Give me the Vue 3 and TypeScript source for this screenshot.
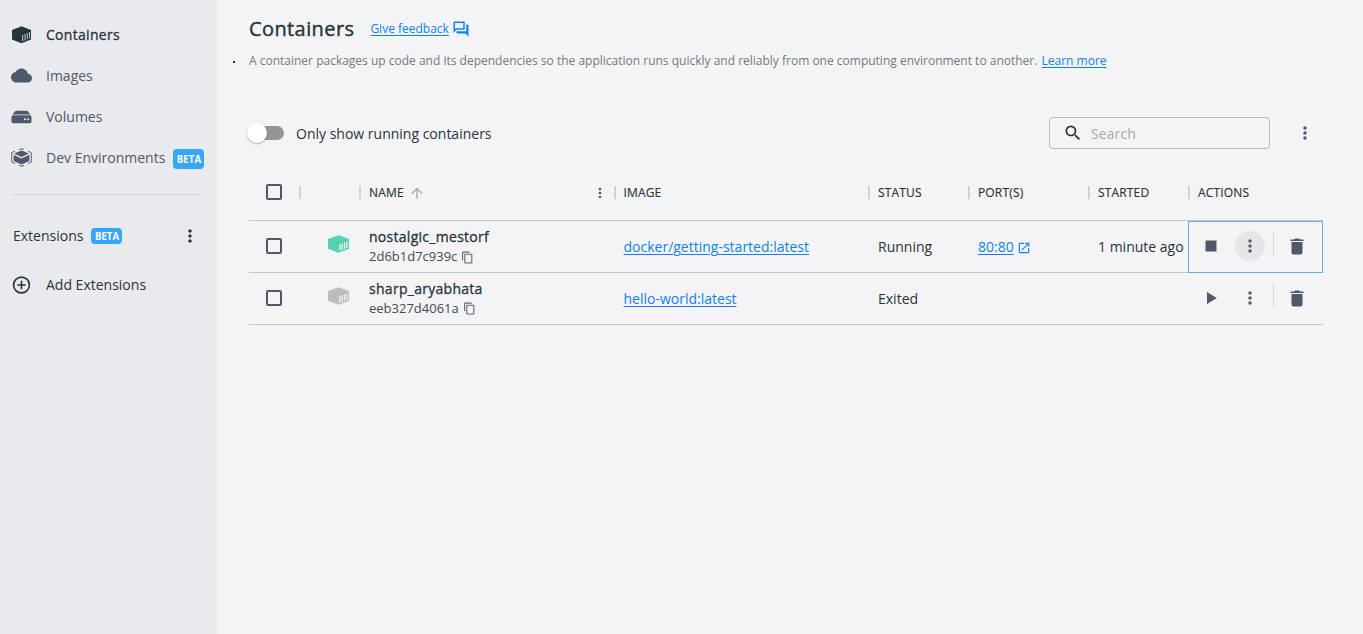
<script setup lang="ts">
import { ref } from 'vue'

interface NavItem {
  label: string
  icon: 'container' | 'cloud' | 'volume' | 'dev'
  beta?: boolean
}
interface ContainerRow {
  name: string
  id: string
  image: string
  status: string
  port?: string
  started: string
  running: boolean
}

const nav: NavItem[] = [
  { label: 'Containers', icon: 'container' },
  { label: 'Images', icon: 'cloud' },
  { label: 'Volumes', icon: 'volume' },
  { label: 'Dev Environments', icon: 'dev', beta: true },
]
const active = ref('Containers')
const columns = ['', '', 'NAME', 'IMAGE', 'STATUS', 'PORT(S)', 'STARTED', 'ACTIONS']
const rows: ContainerRow[] = [
  { name: 'nostalgic_mestorf', id: '2d6b1d7c939c', image: 'docker/getting-started:latest', status: 'Running', port: '80:80', started: '1 minute ago', running: true },
  { name: 'sharp_aryabhata', id: 'eeb327d4061a', image: 'hello-world:latest', status: 'Exited', started: '', running: false },
]
</script>

<template>
  <div class="app">
    <aside class="sidebar">
      <nav>
        <div v-for="item in nav" :key="item.label" class="nav-item" :class="{ active: item.label === active }" @click="active = item.label">
          <span class="nav-icon">
            <svg v-if="item.icon === 'container'" width="21" height="18" viewBox="0 0 21 18">
              <path fill="currentColor" d="M10.500.3 20 4v9.500L10.500 17.300 1 13.500V4z" />
              <path class="bars-dark" d="M11.700 9v6.300M14 8v6.300M16.300 7v6.300M18.500 6v6.300" />
            </svg>
            <svg v-else-if="item.icon === 'cloud'" width="21" height="21" viewBox="0 0 24 24">
              <path fill="currentColor" d="M19.350 10.040C18.670 6.590 15.640 4 12 4 9.110 4 6.600 5.640 5.350 8.040 2.340 8.360 0 10.910 0 14c0 3.310 2.690 6 6 6h13c2.760 0 5-2.240 5-5 0-2.640-2.050-4.780-4.650-4.960z" />
            </svg>
            <svg v-else-if="item.icon === 'volume'" width="21" height="14" viewBox="0 0 22 14">
              <path fill="currentColor" d="M4.800.8Q5.200.4 6 .4h10q.8 0 1.200.4L20.600 4.400H1.400z" />
              <path fill="currentColor" fill-rule="evenodd" d="M2.500 5.200h17q2 0 2 2v4.300q0 2-2 2h-17q-2 0-2-2V7.200q0-2 2-2zM14.600 8.200a1.100 1.100 0 1 0 .01 2.200 1.100 1.100 0 0 0 0-2.200zm3.400 0a1.100 1.100 0 1 0 .01 2.200 1.100 1.100 0 0 0 0-2.200z" />
            </svg>
            <svg v-else width="21" height="19" viewBox="0 0 22 20">
              <path fill="currentColor" d="M11 2.600 18.800 5.800 11 9.400 3.200 5.800zM2.700 7.200l8.300 3.800 8.300-3.800v6.500L11 17.300l-8.300-3.600z" />
              <path fill="none" stroke="currentColor" stroke-width="1" d="M8.300 1.700 11 .7l2.700 1M4 3.400.7 4.900v9.900l3.500 1.600M18 3.400l3.300 1.500v9.900l-3.500 1.600M8.300 18.200l2.700 1.100 2.700-1.100" />
            </svg>
          </span>
          <span>{{ item.label }}</span>
          <span v-if="item.beta" class="beta tall">BETA</span>
        </div>
      </nav>
      <div class="divider"></div>
      <div class="ext-head">
        <span>Extensions</span><span class="beta">BETA</span>
        <svg class="push" width="20" height="20" viewBox="0 0 24 24"><path fill="currentColor" d="M12 8c1.100 0 2-.9 2-2s-.9-2-2-2-2 .9-2 2 .9 2 2 2zm0 2c-1.100 0-2 .9-2 2s.9 2 2 2 2-.9 2-2-.9-2-2-2zm0 6c-1.100 0-2 .9-2 2s.9 2 2 2 2-.9 2-2-.9-2-2-2z" /></svg>
      </div>
      <div class="add-ext">
        <span class="nav-icon"><svg width="19" height="18" viewBox="0 0 18 18" fill="none" stroke="currentColor" stroke-width="1.600"><circle cx="9" cy="9" r="7.900" /><path d="M9 4.800v8.400M4.800 9h8.400" /></svg></span>
        <span>Add Extensions</span>
      </div>
    </aside>

    <main class="main">
      <header class="title-row">
        <h1>Containers</h1>
        <a class="link feedback">Give feedback</a>
        <svg class="chat" width="18" height="18" viewBox="0 0 24 24"><path fill="currentColor" d="M15 4v7H5.170L4 12.170V4h11m1-2H3c-.55 0-1 .45-1 1v14l4-4h10c.55 0 1-.45 1-1V3c0-.55-.45-1-1-1zm5 4h-2v9H6v2c0 .55.45 1 1 1h11l4 4V7c0-.55-.45-1-1-1z" /></svg>
      </header>
      <p class="desc"><i class="bullet"></i>A container packages up code and its dependencies so the application runs quickly and reliably from one computing environment to another. <a class="link learn">Learn more</a></p>

      <div class="toolbar">
        <span class="switch"><i class="knob"></i></span>
        <span class="switch-label">Only show running containers</span>
        <div class="search">
          <svg width="20" height="20" viewBox="0 0 24 24"><path fill="currentColor" d="M15.500 14h-.79l-.28-.27A6.471 6.471 0 0 0 16 9.500 6.500 6.500 0 1 0 9.500 16c1.610 0 3.090-.59 4.230-1.570l.27.28v.79l5 4.990L20.490 19l-4.990-5zm-6 0C7.010 14 5 11.990 5 9.500S7.010 5 9.500 5 14 7.010 14 9.500 11.990 14 9.500 14z" /></svg>
          <span class="placeholder">Search</span>
        </div>
        <svg class="more" width="20" height="20" viewBox="0 0 24 24"><path fill="currentColor" d="M12 8c1.100 0 2-.9 2-2s-.9-2-2-2-2 .9-2 2 .9 2 2 2zm0 2c-1.100 0-2 .9-2 2s.9 2 2 2 2-.9 2-2-.9-2-2-2zm0 6c-1.100 0-2 .9-2 2s.9 2 2 2 2-.9 2-2-.9-2-2-2z" /></svg>
      </div>

      <section class="table">
        <div class="grid head">
          <div v-for="(col, i) in columns" :key="i" class="th" :class="{ first: i === 0 }">
            <i v-if="i === 0" class="checkbox"></i>
            <template v-else><i class="sep"></i><span>{{ col }}</span></template>
            <template v-if="col === 'NAME'">
              <svg class="sort" width="14" height="14" viewBox="0 0 24 24"><path fill="currentColor" d="m4 12 1.410 1.410L11 7.830V20h2V7.830l5.580 5.590L20 12l-8-8-8 8z" transform="translate(-2.400 -2.400) scale(1.200)" /></svg>
              <svg class="push col-more" width="16" height="16" viewBox="0 0 24 24"><path fill="currentColor" d="M12 8c1.100 0 2-.9 2-2s-.9-2-2-2-2 .9-2 2 .9 2 2 2zm0 2c-1.100 0-2 .9-2 2s.9 2 2 2 2-.9 2-2-.9-2-2-2zm0 6c-1.100 0-2 .9-2 2s.9 2 2 2 2-.9 2-2-.9-2-2-2z" /></svg>
            </template>
          </div>
        </div>
        <div v-for="row in rows" :key="row.id" class="grid row">
          <div class="cell center"><i class="checkbox"></i></div>
          <div class="cell state" :class="{ running: row.running }">
            <svg width="22" height="18" viewBox="0 0 22 18">
              <path fill="currentColor" d="M10.500.2 21 4v9.800L10.500 17.800 0 13.800V4z" />
              <path class="bars" d="M11.900 9v6.500M14.200 8.200v6.500M16.600 7.300v6.500M19 6.500V13" />
            </svg>
          </div>
          <div class="cell name">
            <strong>{{ row.name }}</strong>
            <span class="id">{{ row.id }}<svg width="13" height="13" viewBox="0 0 24 24"><path fill="currentColor" d="M16 1H4c-1.100 0-2 .9-2 2v14h2V3h12V1zm3 4H8c-1.100 0-2 .9-2 2v14c0 1.100.9 2 2 2h11c1.100 0 2-.9 2-2V7c0-1.100-.9-2-2-2zm0 16H8V7h11v14z" /></svg></span>
          </div>
          <div class="cell"><a class="link">{{ row.image }}</a></div>
          <div class="cell">{{ row.status }}</div>
          <div class="cell port"><template v-if="row.port"><a class="link">{{ row.port }}</a><svg width="14" height="14" viewBox="0 0 24 24"><path fill="currentColor" d="M19 19H5V5h7V3H5c-1.110 0-2 .9-2 2v14c0 1.100.89 2 2 2h14c1.100 0 2-.9 2-2v-7h-2v7zM14 3v2h3.590l-9.830 9.830 1.410 1.410L19 6.410V10h2V3h-7z" /></svg></template></div>
          <div class="cell started">{{ row.started }}</div>
          <div class="cell actions" :class="{ focused: row.running }">
            <span class="act run"><svg width="12" height="12" viewBox="0 0 12 12"><path v-if="row.running" fill="currentColor" d="M.5.500h11v11H.5z" /><path v-else fill="currentColor" d="M2 0v12l9.800-6z" /></svg></span>
            <span class="act menu" :class="{ hover: row.running }"><svg width="20" height="20" viewBox="0 0 24 24"><path fill="currentColor" d="M12 8c1.100 0 2-.9 2-2s-.9-2-2-2-2 .9-2 2 .9 2 2 2zm0 2c-1.100 0-2 .9-2 2s.9 2 2 2 2-.9 2-2-.9-2-2-2zm0 6c-1.100 0-2 .9-2 2s.9 2 2 2 2-.9 2-2-.9-2-2-2z" /></svg></span>
            <i class="vline"></i>
            <svg class="trash" width="14" height="17" viewBox="0 0 14 17"><path fill="currentColor" d="M.5 1.500h3.500L5 .5h4l1 1h3.500V3H.5zM1.500 4h11v10.500q0 2-2 2h-7q-2 0-2-2z" /></svg>
          </div>
        </div>
      </section>
    </main>
  </div>
</template>

<style>
body { margin: 0; background: #f4f4f6; }
</style>

<style scoped>
.app {
  display: flex;
  height: 634px;
  overflow: hidden;
  background: #f4f4f6;
  color: #27343b;
  font: 14px/20px "Open Sans", "Noto Sans", sans-serif;
}
svg { display: block; flex: none; }
.sidebar { width: 217px; flex: none; box-sizing: border-box; padding-top: 14px; background: #e9eaee; }
.nav-item, .add-ext { display: flex; align-items: center; height: 41px; color: #4f5969; }
.nav-item.active { color: #27343b; font-weight: 500; letter-spacing: .3px; -webkit-text-stroke: .3px currentColor; }
.nav-icon { width: 21px; margin: 0 14px 0 11px; display: flex; justify-content: center; }
.beta { box-sizing: border-box; width: 31px; height: 16px; padding-left: 3.5px; border-radius: 4px; background: #36a6f8; color: #fff; font-size: 9.7px; line-height: 17px; font-weight: 700; margin-left: 8px; }
.beta.tall { height: 20px; line-height: 21px; margin-top: 2px; }
.divider { height: 1px; margin: 16px 16px 0 13px; background: #d0d2d7; }
.ext-head { display: flex; align-items: center; height: 20px; margin-top: 31px; padding: 0 17px 0 13px; }
.push { margin-left: auto; }
.add-ext { margin-top: 18px; color: #27343b; }
.main { flex: 1; padding: 0 40px 0 32px; }
.title-row { display: flex; align-items: center; height: 32px; margin-top: 13px; }
h1 { margin: 0; font-size: 20px; line-height: 28px; font-weight: 500; letter-spacing: .4px; -webkit-text-stroke: .4px currentColor; }
.link { color: #0c82fa; text-decoration: underline; text-decoration-thickness: 1px; text-underline-offset: 2px; }
.feedback { margin-left: 16px; font-size: 12px; }
.chat { margin-left: 3.5px; color: #0c82fa; }
.desc { position: relative; margin: 6px 0 0; font-size: 12px; line-height: 20px; color: #757a80; white-space: nowrap; }
.bullet { position: absolute; left: -16px; top: 10px; width: 2px; height: 2px; background: #333; }
.learn { margin-left: 1px; }
.toolbar { display: flex; align-items: center; height: 32px; margin-top: 46px; }
.switch { position: relative; width: 35px; height: 14px; border-radius: 7px; background: #959595; }
.knob { position: absolute; left: -2px; top: -3px; width: 20px; height: 20px; border-radius: 50%; background: #fff; box-shadow: 0 1px 2px rgba(0, 0, 0, .3); }
.switch-label { margin-left: 12px; padding-top: 2px; }
.search { display: flex; align-items: center; box-sizing: border-box; width: 221px; height: 32px; margin-left: auto; padding-left: 13px; border: 1px solid #b9bbbf; border-radius: 4px; color: #a6a8ac; }
.search svg { margin-right: 8px; color: #27343b; }
.placeholder { padding-top: 2px; letter-spacing: .1px; }
.more { margin: 0 8.5px 0 24.5px; color: #4f5969; }
.table { margin-top: 16px; }
.grid { display: grid; grid-template-columns: 50px 60px 254.5px 254.5px 100px 120px 100px 135px; border-bottom: 1px solid #c1c6cf; }
.head { height: 55px; font-size: 12px; font-weight: 500; letter-spacing: .16px; -webkit-text-stroke: .15px currentColor; }
.th { display: flex; align-items: center; }
.th.first, .center { justify-content: center; }
.checkbox { width: 12px; height: 12px; border: 2px solid #4f5969; border-radius: 2px; }
.head .checkbox { margin-bottom: 1px; }
.row .checkbox { margin-bottom: 2px; }
.sep { width: 2px; height: 13px; margin: 0 7.600px 0 .4px; background: #d0d2d8; }
.sort { margin-left: 6px; color: #a5a9af; }
.col-more { margin-right: 6px; color: #4f5969; }
.row { height: 51px; }
.cell { display: flex; align-items: center; padding-left: 10px; white-space: nowrap; }
.cell.center { padding: 0; }
.state { padding: 0 0 6px 29px; color: #bcbcbd; }
.state.running { color: #55d2b3; }
.bars { stroke: #f4f4f6; stroke-width: 1.2; fill: none; }
.bars-dark { stroke: #c5c9ce; stroke-width: 1; fill: none; }
.name { flex-direction: column; align-items: flex-start; justify-content: center; }
.name strong { font-weight: 500; line-height: 20px; letter-spacing: .28px; -webkit-text-stroke: .3px currentColor; }
.id { display: flex; align-items: center; gap: 4px; margin-top: -1px; padding-bottom: 1px; font-size: 13px; line-height: 20px; color: #414c55; }
.id svg { margin-top: 2px; color: #5d6677; }
.port svg { margin: 2px 0 0 3px; color: #0c82fa; }
.actions { padding: 0; color: #4f5969; }
.actions.focused { height: 52px; box-sizing: border-box; border: 1px solid #6aabef; }
.act { display: flex; align-items: center; justify-content: center; }
.run { width: 12px; margin: 0 0 1px 17px; }
.focused .run { margin: 0 0 2px 16px; }
.menu { width: 30px; height: 30px; margin: 0 0 1px 18px; border-radius: 50%; }
.focused .menu { margin-bottom: 2px; }
.menu.hover { background: #e6e6e9; }
.vline { width: 1px; height: 24px; margin: 0 16px 7px 8px; background: #d6d7dc; }
.trash { margin-bottom: 1px; }
</style>
